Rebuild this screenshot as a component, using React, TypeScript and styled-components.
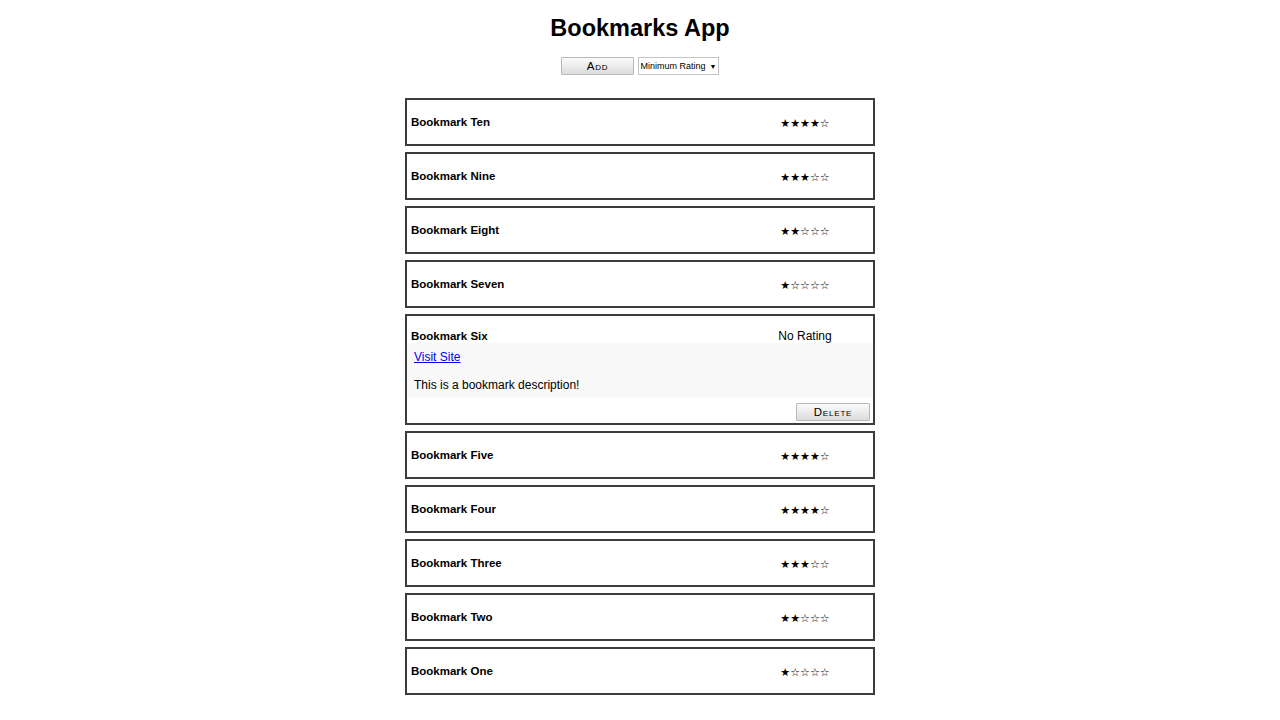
import React from "react";
import styled, { createGlobalStyle } from "styled-components";

const GlobalStyle = createGlobalStyle`
  body {
    margin: 0;
    background: #fff;
    font-family: "Liberation Sans", Arial, sans-serif;
    color: #000;
  }
`;

const Page = styled.div`
  display: flex;
  flex-direction: column;
  align-items: center;
  padding-top: 14px;
`;

const Title = styled.h1`
  margin: 0;
  font-size: 23.5px;
  line-height: 28px;
  font-weight: bold;
`;

const Controls = styled.div`
  display: flex;
  gap: 4px;
  margin-top: 15px;
  height: 18px;
`;

const GrayButton = styled.button<{ $width: number }>`
  width: ${(p) => p.$width}px;
  height: 18px;
  padding: 0;
  border: 1px solid #b8b8b8;
  border-radius: 1px;
  background: linear-gradient(#fbfbfb, #dcdcdc);
  font-family: "Liberation Sans", Arial, sans-serif;
  font-size: 11.5px;
  font-variant: small-caps;
  letter-spacing: 0.8px;
  color: #000;
  line-height: 16px;
`;

const RatingSelect = styled.div`
  width: 81px;
  height: 18px;
  box-sizing: border-box;
  border: 1px solid #c4c4c4;
  background: #fff;
  display: flex;
  align-items: center;
  justify-content: center;
  gap: 4px;
  font-size: 9px;
  color: #000;
`;

const Arrow = styled.span`
  font-size: 7px;
`;

const List = styled.ul`
  list-style: none;
  margin: 23px 0 0;
  padding: 0;
  width: 470px;
  display: flex;
  flex-direction: column;
  gap: 6px;
`;

const Item = styled.li<{ $open: boolean }>`
  border: 2px solid #3c3c3c;
  min-height: 44px;
  padding-bottom: ${(p) => (p.$open ? "2px" : "0")};
`;

const Header = styled.div<{ $open: boolean }>`
  display: flex;
  align-items: flex-end;
  height: ${(p) => (p.$open ? "27px" : "29px")};
  padding-left: 4px;
`;

const ItemTitle = styled.h3`
  flex: 1;
  margin: 0;
  font-size: 11.5px;
  font-weight: bold;
  line-height: 13px;
`;

const Rating = styled.div<{ $stars: boolean }>`
  width: 100px;
  margin-right: 18px;
  text-align: center;
  font-family: ${(p) => (p.$stars ? '"DejaVu Sans", sans-serif' : '"Liberation Sans", Arial, sans-serif')};
  font-size: ${(p) => (p.$stars ? "11px" : "12px")};
  line-height: 14px;
  color: #000;
  transform: translateY(${(p) => (p.$stars ? "2px" : "0")});
`;

const Details = styled.div`
  background: #f9f9f9;
  height: 55px;
  padding: 7px 7px 0;
  box-sizing: border-box;
  font-size: 12px;
`;

const VisitLink = styled.a`
  color: #0000ee;
  text-decoration: underline;
  display: block;
  line-height: 14px;
`;

const Description = styled.p`
  margin: 14px 0 0;
  line-height: 14px;
`;

const Actions = styled.div`
  display: flex;
  justify-content: flex-end;
  padding: 5px 3px 0 0;
`;

type Bookmark = { title: string; rating: number | null };

const bookmarks: Bookmark[] = [
  { title: "Bookmark Ten", rating: 4 },
  { title: "Bookmark Nine", rating: 3 },
  { title: "Bookmark Eight", rating: 2 },
  { title: "Bookmark Seven", rating: 1 },
  { title: "Bookmark Six", rating: null },
  { title: "Bookmark Five", rating: 4 },
  { title: "Bookmark Four", rating: 4 },
  { title: "Bookmark Three", rating: 3 },
  { title: "Bookmark Two", rating: 2 },
  { title: "Bookmark One", rating: 1 },
];

const stars = (n: number) => "★".repeat(n) + "☆".repeat(5 - n);

export default function App() {
  return (
    <>
      <GlobalStyle />
      <Page>
        <Title>Bookmarks App</Title>
        <Controls>
          <GrayButton $width={73}>Add</GrayButton>
          <RatingSelect>
            Minimum Rating <Arrow>▼</Arrow>
          </RatingSelect>
        </Controls>
        <List>
          {bookmarks.map((b) => {
            const open = b.rating === null;
            return (
              <Item key={b.title} $open={open}>
                <Header $open={open}>
                  <ItemTitle>{b.title}</ItemTitle>
                  <Rating $stars={!open}>{open ? "No Rating" : stars(b.rating as number)}</Rating>
                </Header>
                {open && (
                  <>
                    <Details>
                      <VisitLink href="#">Visit Site</VisitLink>
                      <Description>This is a bookmark description!</Description>
                    </Details>
                    <Actions>
                      <GrayButton $width={74}>Delete</GrayButton>
                    </Actions>
                  </>
                )}
              </Item>
            );
          })}
        </List>
      </Page>
    </>
  );
}
